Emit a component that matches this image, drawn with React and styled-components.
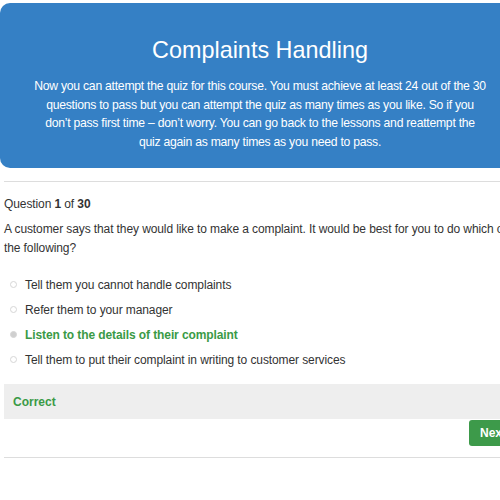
import React from 'react'
import styled, { createGlobalStyle } from 'styled-components'

const Global = createGlobalStyle`
    html, body {
        margin: 0;
        padding: 0;
        background: #fff;
        overflow: hidden;
        font-family: "Liberation Sans", Arial, sans-serif;
        color: #333;
    }
`

const options = [
    { text: 'Tell them you cannot handle complaints' },
    { text: 'Refer them to your manager' },
    { text: 'Listen to the details of their complaint', picked: true },
    { text: 'Tell them to put their complaint in writing to customer services' },
]

export default function App() {
    return (
        <Page>
            <Global />
            <Banner>
                <Title>Complaints Handling</Title>
                <Intro>
                    Now you can attempt the quiz for this course. You must achieve at least 24 out of the 30<br />
                    questions to pass but you can attempt the quiz as many times as you like. So if you<br />
                    don’t pass first time – don’t worry. You can go back to the lessons and reattempt the<br />
                    quiz again as many times as you need to pass.
                </Intro>
            </Banner>
            <Quiz>
                <Counter>Question <b>1</b> of <b>30</b></Counter>
                <Prompt>
                    A customer says that they would like to make a complaint. It would be best for you to do which of<br />
                    the following?
                </Prompt>
                <Options>
                    {options.map((o) => (
                        <Option key={o.text} $picked={o.picked}>
                            <Radio $picked={o.picked} />
                            {o.text}
                        </Option>
                    ))}
                </Options>
                <Result>Correct</Result>
                <Actions>
                    <NextButton>Next</NextButton>
                </Actions>
            </Quiz>
        </Page>
    )
}

const Page = styled.div`
    width: 560px;
    padding-top: 3px;
`

const Banner = styled.div`
    width: 520px;
    box-sizing: border-box;
    height: 165px;
    background: #3580c5;
    border-radius: 10px;
    color: #fff;
    text-align: center;
    padding: 33px 10px 20px;
`

const Title = styled.h1`
    margin: 0 0 13px;
    font-size: 23.4px;
    font-weight: normal;
    line-height: 28px;
`

const Intro = styled.p`
    margin: 0;
    font-size: 12.2px;
    letter-spacing: -0.25px;
    line-height: 18.5px;
    white-space: nowrap;
`

const Quiz = styled.div`
    width: 536px;
    margin: 13px 0 0 4px;
    border-top: 1px solid #ddd;
    border-bottom: 1px solid #ddd;
    padding: 13px 0 11px;
`

const Counter = styled.div`
    font-size: 12px;
    letter-spacing: -0.1px;
    line-height: 18px;
    b { font-weight: bold; }
`

const Prompt = styled.p`
    margin: 7px 0 0;
    font-size: 12px;
    letter-spacing: -0.1px;
    line-height: 18.5px;
    white-space: nowrap;
`

const Options = styled.ul`
    list-style: none;
    margin: 15px 0 0;
    padding: 0;
`

const Option = styled.li`
    display: flex;
    align-items: center;
    height: 25px;
    padding-left: 6px;
    font-size: 12px;
    letter-spacing: -0.1px;
    color: ${(p) => (p.$picked ? '#3a9a46' : '#333')};
    font-weight: ${(p) => (p.$picked ? 'bold' : 'normal')};
`

const Radio = styled.span`
    width: 5px;
    height: 5px;
    border-radius: 50%;
    border: 1px solid #d6d6d6;
    background: ${(p) => (p.$picked ? '#cfcfcf' : '#fff')};
    margin-right: 8px;
    flex-shrink: 0;
`

const Result = styled.div`
    margin-top: 12px;
    background: #eee;
    height: 35px;
    display: flex;
    align-items: center;
    padding-left: 9px;
    color: #3a9a46;
    font-weight: bold;
    font-size: 12px;
`

const Actions = styled.div`
    display: flex;
    justify-content: flex-end;
    padding-right: 21px;
`

const NextButton = styled.button`
    width: 50px;
    height: 26px;
    margin-top: 1px;
    background: #3d9a4a;
    border: none;
    border-radius: 3px;
    color: #fff;
    font-family: inherit;
    font-weight: bold;
    font-size: 12px;
    text-align: left;
    padding-left: 11px;
`
